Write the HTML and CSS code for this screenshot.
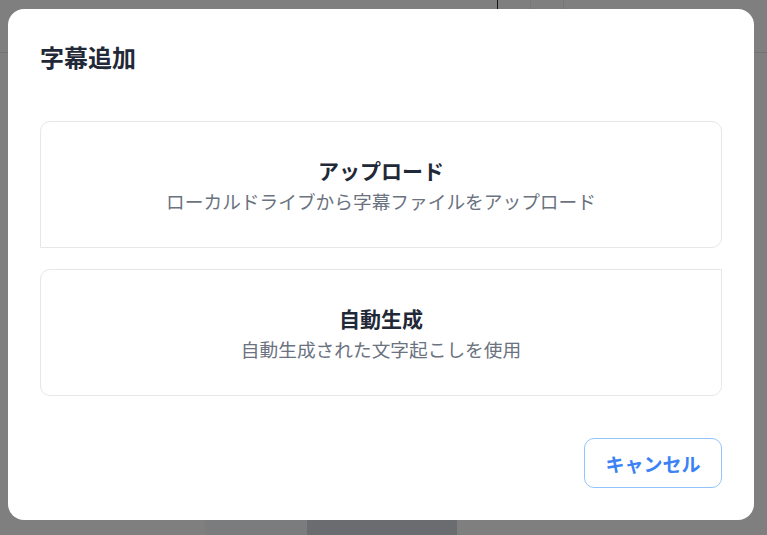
FILE: index.html
```html
<!DOCTYPE html>
<html lang="ja">
<head>
<meta charset="utf-8">
<title>字幕追加</title>
<link rel="stylesheet" href="styles.css">
</head>
<body>
<div class="page">
  <header class="page-header">
    <div class="hdr-left"></div>
    <div class="hdr-sep"></div>
    <div class="hdr-cell"></div>
    <div class="hdr-cell"></div>
  </header>
  <main class="page-main">
    <div class="page-footer">
      <div class="ft-left"></div>
      <div class="ft-btn"></div>
    </div>
  </main>
</div>
<div class="overlay">
  <div class="modal">
    <h2 class="modal-title">字幕追加</h2>
    <div class="options">
      <button class="option option-upload">
        <span class="option-title">アップロード</span>
        <span class="option-desc">ローカルドライブから字幕ファイルをアップロード</span>
      </button>
      <button class="option option-auto">
        <span class="option-title">自動生成</span>
        <span class="option-desc">自動生成された文字起こしを使用</span>
      </button>
    </div>
    <div class="actions">
      <button class="btn-cancel">キャンセル</button>
    </div>
  </div>
</div>
</body>
</html>
```
FILE: styles.css
```css
* { box-sizing: border-box; }
html, body { margin: 0; padding: 0; }
body {
  width: 767px;
  height: 535px;
  overflow: hidden;
  background: #ffffff;
  font-family: "Noto Sans CJK JP", "Noto Sans", sans-serif;
}
.page {
  height: 535px;
  display: flex;
  flex-direction: column;
}
.page-header {
  height: 53px;
  display: flex;
  border-bottom: 1px solid #e6e6e6;
}
.hdr-left { width: 497px; }
.hdr-sep { width: 1px; background: #2a2a2a; }
.hdr-cell { width: 33px; border-right: 1px solid #efefef; }
.page-main {
  flex: 1;
  display: flex;
  flex-direction: column;
  justify-content: flex-end;
}
.page-footer {
  height: 16px;
  display: flex;
  padding-left: 205px;
}
.ft-left { width: 102px; background: #f6f8fa; }
.ft-btn { width: 150px; background: #d4d9de; }

.overlay {
  position: fixed;
  inset: 0;
  background: rgba(0, 0, 0, 0.5);
  padding: 9px 13px 15px 8px;
}
.modal {
  width: 746px;
  height: 511px;
  background: #ffffff;
  border-radius: 16px;
  padding: 30px 32px 32px;
  display: flex;
  flex-direction: column;
}
.modal-title {
  margin: 0 0 46px;
  font-size: 24px;
  line-height: 36px;
  font-weight: 700;
  color: #1f2937;
}
.options {
  display: flex;
  flex-direction: column;
  gap: 21px;
}
.option {
  display: flex;
  flex-direction: column;
  align-items: center;
  gap: 4px;
  height: 127px;
  padding: 34px 24px 0;
  background: #ffffff;
  border: 1px solid #e5e7eb;
  border-radius: 10px;
  font-family: inherit;
  cursor: pointer;
}
.option-upload { border-bottom-left-radius: 0; }
.option-auto { border-top-right-radius: 0; }
.option-title {
  font-size: 21px;
  line-height: 28px;
  font-weight: 700;
  color: #1f2937;
}
.option-desc {
  font-size: 18.7px;
  line-height: 26px;
  color: #6b7280;
}
.actions {
  margin-top: auto;
  display: flex;
  justify-content: flex-end;
}
.btn-cancel {
  width: 138px;
  height: 50px;
  background: #ffffff;
  border: 1px solid #93c5fd;
  border-radius: 10px;
  color: #3b82f6;
  font-family: inherit;
  font-size: 19px;
  font-weight: 700;
  cursor: pointer;
}
```
